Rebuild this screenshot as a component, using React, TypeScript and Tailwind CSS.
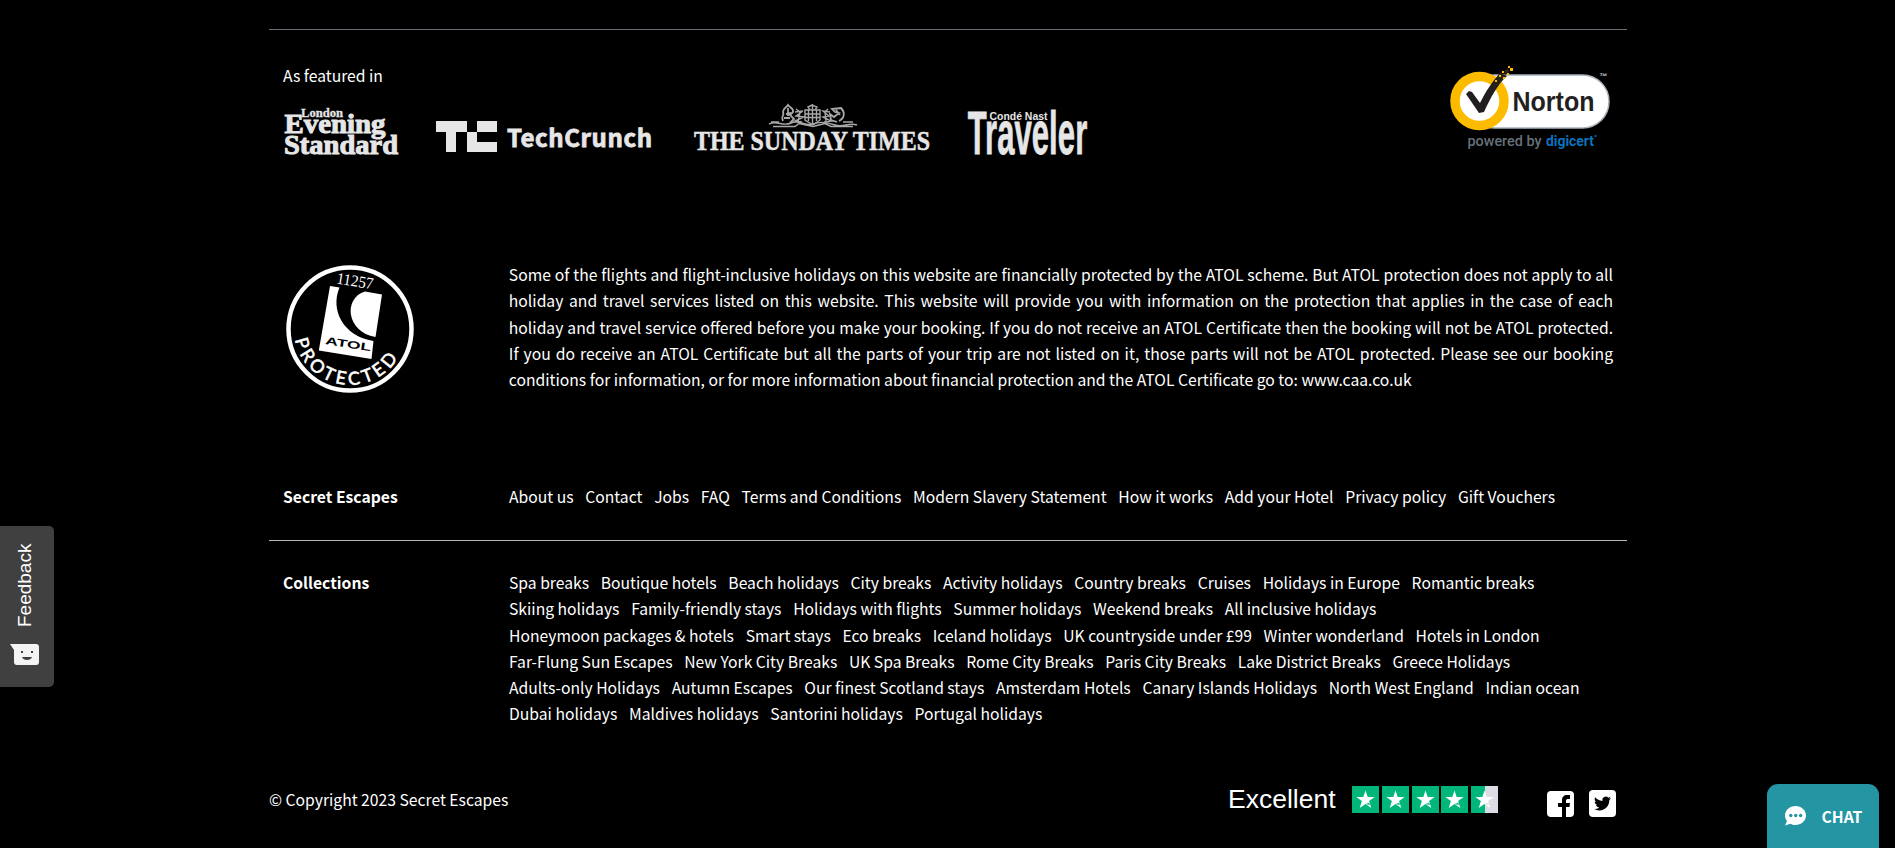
import React from "react";

const companyLinks = ["About us", "Contact", "Jobs", "FAQ", "Terms and Conditions", "Modern Slavery Statement", "How it works", "Add your Hotel", "Privacy policy", "Gift Vouchers"];

const collectionRows = [
  ["Spa breaks", "Boutique hotels", "Beach holidays", "City breaks", "Activity holidays", "Country breaks", "Cruises", "Holidays in Europe", "Romantic breaks"],
  ["Skiing holidays", "Family-friendly stays", "Holidays with flights", "Summer holidays", "Weekend breaks", "All inclusive holidays"],
  ["Honeymoon packages & hotels", "Smart stays", "Eco breaks", "Iceland holidays", "UK countryside under £99", "Winter wonderland", "Hotels in London"],
  ["Far-Flung Sun Escapes", "New York City Breaks", "UK Spa Breaks", "Rome City Breaks", "Paris City Breaks", "Lake District Breaks", "Greece Holidays"],
  ["Adults-only Holidays", "Autumn Escapes", "Our finest Scotland stays", "Amsterdam Hotels", "Canary Islands Holidays", "North West England", "Indian ocean"],
  ["Dubai holidays", "Maldives holidays", "Santorini holidays", "Portugal holidays"],
];

const atolLines = [
  "Some of the flights and flight-inclusive holidays on this website are financially protected by the ATOL scheme. But ATOL protection does not apply to all",
  "holiday and travel services listed on this website. This website will provide you with information on the protection that applies in the case of each",
  "holiday and travel service offered before you make your booking. If you do not receive an ATOL Certificate then the booking will not be ATOL protected.",
  "If you do receive an ATOL Certificate but all the parts of your trip are not listed on it, those parts will not be ATOL protected. Please see our booking",
];

function LinkRow({ items }: { items: string[] }) {
  return (
    <div className="flex gap-[11.700px] whitespace-nowrap">
      {items.map((t) => (
        <a key={t} href="#">{t}</a>
      ))}
    </div>
  );
}

function EveningStandard() {
  return (
    <svg className="overflow-visible" width="118" height="54" viewBox="0 0 118 54" fill="#e6e6e6" fontFamily="'Liberation Serif', serif" fontWeight="700" stroke="#e6e6e6">
      <text x="18" y="12.500" fontSize="12" strokeWidth=".3" textLength="42" lengthAdjust="spacingAndGlyphs">London</text>
      <text x="1.500" y="29" fontSize="28" strokeWidth="1" textLength="101" lengthAdjust="spacingAndGlyphs">Evening</text>
      <text x="1" y="50" fontSize="28" strokeWidth="1" textLength="114" lengthAdjust="spacingAndGlyphs">Standard</text>
    </svg>
  );
}

function TechCrunch() {
  return (
    <svg className="overflow-visible" width="218" height="36" viewBox="0 0 218 36" fill="#e6e6e6">
      <path d="M0 0H31V11H20V31H10V11H0Z M41 0H61V11H41Z M31 11H41V21H61V31H31Z" />
      <text x="71" y="26" fontFamily="'Noto Sans CJK JP', sans-serif" fontWeight="700" fontSize="24" stroke="#e6e6e6" strokeWidth=".8" textLength="145">TechCrunch</text>
    </svg>
  );
}

function SundayTimes() {
  return (
    <svg className="overflow-visible" width="238" height="54" viewBox="0 0 238 54" fill="#e6e6e6">
      <g fill="none" stroke="#a8a8a8" strokeWidth="1.4">
        <path d="M76 21c8-4 14 3 22-1s14 4 22 1 14-2 22 1 14-3 22 0M80 23.500h22l4-3 14 3 12-3 6 3h22M78 19h8M150 19h10" />
        <path d="M90 18c-3-5 2-5 0-9 0-4 4-5 5-7 2 3 6 3 5 7l-3 3 4 4-4 4M93 11l5-1M91 15h6M95 5v8" strokeWidth="1.8" />
        <path d="M146 18c6-3 6-9 2-13l-9 1 3 3 4 1-5 4-4-3 1 6 6 2M143 7l4 5" strokeWidth="1.8" />
        <path d="M112 7h15v10l-7 5-8-5zM112 11h15M112 14.500h15M119.500 1v21M115.500 7v11M123.500 7v11M115 4l4-2 5 2-2 3h-5zM102 9l8-1-7 5 8 1-9 4 7 1M137 9l-7-1 6 5-6 1 8 4-7 1M103 6l4 3-2 10M135 6l-3 3 1 10" />
      </g>
      <text x="1" y="47" fontFamily="'Liberation Serif', serif" fontWeight="700" fontSize="26.500" stroke="#e6e6e6" strokeWidth=".5" textLength="236" lengthAdjust="spacingAndGlyphs">THE SUNDAY TIMES</text>
    </svg>
  );
}

function Traveler() {
  return (
    <svg className="overflow-visible" width="122" height="48" viewBox="0 0 122 48" fill="#e6e6e6" stroke="#e6e6e6" fontFamily="'Liberation Sans', sans-serif" fontWeight="700">
      <g transform="translate(.7 44) scale(.5 1)">
        <text x="0" y="0" fontSize="62" strokeWidth=".8" textLength="239">Traveler</text>
      </g>
      <text x="22.500" y="9.500" fontSize="11" stroke="#000" strokeWidth="2" paintOrder="stroke" textLength="58" lengthAdjust="spacingAndGlyphs">Condé Nast</text>
    </svg>
  );
}

function Norton() {
  return (
    <svg className="overflow-visible" width="166" height="90" viewBox="0 0 166 90">
      <rect x="18" y="10" width="141" height="53" rx="26.500" fill="#fff" stroke="#a9b1ba" strokeWidth="1.500" />
      <circle cx="29.500" cy="36" r="24.500" fill="#fff" stroke="#fdbb00" strokeWidth="9.500" />
      <path d="M16 29l3-3 3 1 8 11C36 26 42 17 50 8l7 3C47 20 40 34 34 47l-5 1z" fill="#231f20" />
      <path d="M46 13l5-6 4 5-5 5zM54 6l4-3 1 4-4 3z" fill="#29230f" />
      <path d="M45 15h2v2h-2zM49 10h2v2h-2zM52 6h2v2h-2zM53 12h2v2h-2zM57 8h2v2h-2zM60 3h3v3h-3zM58 1h2v2h-2z" fill="#fdbb00" />
      <text x="62.500" y="46" fontFamily="'Liberation Sans', sans-serif" fontWeight="700" fontSize="27" fill="#231f20" textLength="82" lengthAdjust="spacingAndGlyphs">Norton</text>
      <text x="149.500" y="14" fontFamily="'Liberation Sans', sans-serif" fontWeight="700" fontSize="8" fill="#c9cfd6">™</text>
      <text x="17.500" y="81" fontFamily="Roboto, sans-serif" fontWeight="500" fontSize="15.500" fill="#66717a" textLength="74" lengthAdjust="spacingAndGlyphs">powered by</text>
      <text x="96" y="81" fontFamily="Roboto, sans-serif" fontWeight="700" fontSize="15.500" fill="#0b72bd" textLength="48" lengthAdjust="spacingAndGlyphs">digicert</text>
      <circle cx="145.500" cy="71" r="1" fill="#0b72bd" />
    </svg>
  );
}

function Atol() {
  return (
    <svg className="overflow-visible" width="130" height="130" viewBox="0 0 130 130">
      <defs>
        <path id="atolBottom" d="M9.850 74.700A56 56 0 0 0 120.150 74.700" />
      </defs>
      <circle cx="65" cy="65" r="61.500" fill="none" stroke="#fff" strokeWidth="4.500" />
      <path d="M45 22L54.500 23.500C45 46 58 72 88.500 77L86.500 95L33.800 86.500Z" fill="#fff" />
      <path d="M80 27.500L97 30.500L90.500 73C61 68 58 34 80 27.500Z" fill="#fff" />
      <text transform="translate(40 80) rotate(9)" fontFamily="'Liberation Sans', sans-serif" fontWeight="700" fontSize="10.500" textLength="46" lengthAdjust="spacingAndGlyphs">ATOL</text>
      <text transform="translate(51 19.500) rotate(9)" fontFamily="'Liberation Serif', serif" fontSize="16.500" fill="#fff" textLength="37" lengthAdjust="spacingAndGlyphs">11257</text>
      <text fontFamily="Lato, sans-serif" fontSize="18" fill="#fff" stroke="#fff" strokeWidth=".6">
        <textPath href="#atolBottom" startOffset="1" textLength="134">PROTECTED</textPath>
      </text>
    </svg>
  );
}

function Star({ half = false }: { half?: boolean }) {
  return (
    <svg width="27" height="27" viewBox="0 0 27 27">
      <path d="M0 0h27v27H0z" fill={half ? "#dcdce6" : "#00b67a"} />
      {half && <path d="M0 0h14v27H0z" fill="#00b67a" />}
      <path d="M13.500 4.500l2.200 6.400h7l-5.600 4.200 2.200 7-5.800-4.200-5.800 4.200 2.200-7-5.600-4.200h7z" fill="#fff" />
      <path d="M13.500 17.900l3.800-1.200.6 2.200z" fill={half ? "#dcdce6" : "#00b67a"} />
    </svg>
  );
}

export default function App() {
  return (
    <div className="relative h-[848px] w-full overflow-hidden bg-black font-['Noto_Sans_CJK_JP','Source_Sans_Pro',sans-serif] text-[15.700px] leading-[26.250px] text-white">
      <footer className="ml-[269px] w-[1358px] pt-[29px]">
        <section className="flex h-[220px] justify-between border-t border-[#6b6c76] px-[14px]">
          <div className="pt-[33px]">
            <p>As featured in</p>
            <div className="mt-[11px] flex h-[58px] items-end">
              <div className="h-[54px] w-[153px]"><EveningStandard /></div>
              <div className="h-[37.500px] w-[257px]"><TechCrunch /></div>
              <div className="h-[55px] w-[274px]"><SundayTimes /></div>
              <div className="h-[48.500px]"><Traveler /></div>
            </div>
          </div>
          <div className="-mr-[3px] pt-[35px]"><Norton /></div>
        </section>

        <section className="flex h-[235px] px-[14px]">
          <div className="w-[226px] pt-[15px] pl-[2.300px]"><Atol /></div>
          <div className="w-[1105px] pt-[13px]">
            {atolLines.map((line) => (
              <p key={line} className="whitespace-nowrap [text-align-last:justify]">{line}</p>
            ))}
            <p>conditions for information, or for more information about financial protection and the ATOL Certificate go to: www.caa.co.uk</p>
          </div>
        </section>

        <section className="flex h-[57px] border-b border-[#b5b6be] px-[14px]">
          <h3 className="w-[226px] font-bold">Secret Escapes</h3>
          <LinkRow items={companyLinks} />
        </section>

        <section className="flex h-[216px] px-[14px] pt-[29px]">
          <h3 className="w-[226px] font-bold">Collections</h3>
          <div>
            {collectionRows.map((row) => (
              <LinkRow key={row[0]} items={row} />
            ))}
          </div>
        </section>

        <section className="flex pt-[26px]">
          <p className="w-[959px] pt-[4px]">© Copyright 2023 Secret Escapes</p>
          <p className="w-[124px] pt-[3px] font-['Liberation_Sans',sans-serif] text-[26.500px]">Excellent</p>
          <div className="flex gap-[2.750px] pt-[3px]">
            <Star /><Star /><Star /><Star /><Star half />
          </div>
          <div className="ml-[49px] flex gap-[15px] pt-[7px]">
            <svg className="mt-px" width="27" height="26" viewBox="0 0 27 26">
              <rect width="27" height="26" rx="4" fill="#fff" />
              <path d="M15 26V16h-4v-4h4V9c0-3 2-5 5-5h3v4h-2c-1 0-2 .5-2 1.500V12h4l-.5 4H19v10z" fill="#000" />
            </svg>
            <svg width="27" height="27" viewBox="0 0 27 27">
              <rect width="27" height="27" rx="4" fill="#fff" />
              <path transform="translate(5 5) scale(.71)" d="M23.950 4.570a10 10 0 0 1-2.820.770 4.960 4.960 0 0 0 2.160-2.720c-.95.550-2 .960-3.130 1.180a4.920 4.920 0 0 0-8.380 4.480C7.690 8.100 4.070 6.130 1.640 3.160a4.820 4.820 0 0 0-.67 2.480c0 1.710.87 3.210 2.190 4.100a4.900 4.900 0 0 1-2.230-.620v.060a4.920 4.920 0 0 0 3.950 4.830 5 5 0 0 1-2.210.080 4.940 4.940 0 0 0 4.600 3.420A9.870 9.870 0 0 1 0 19.540a13.990 13.990 0 0 0 7.550 2.210c9.050 0 14-7.500 14-13.980 0-.210 0-.420-.02-.630a9.940 9.940 0 0 0 2.460-2.550z" fill="#000" />
            </svg>
          </div>
        </section>
      </footer>

      <button className="absolute top-[526px] left-0 flex h-[161px] w-[54px] flex-col items-center rounded-r-[5px] bg-[#404040] pr-[5px]">
        <span className="mt-[17px] h-[85px] [writing-mode:vertical-rl] rotate-180 text-center font-['Liberation_Sans',sans-serif] text-[19px] leading-[26px]">Feedback</span>
        <svg className="mt-[16px]" width="30" height="22" viewBox="0 0 30 22">
          <path d="M0 0H26a3 3 0 0 1 3 3V18a3 3 0 0 1-3 3H7a3 3 0 0 1-3-3V6Z" fill="#f4f4f4" />
          <path d="M11 7h2v2h-2zM21 7h2v2h-2zM12 13h10c-1 4-9 4-10 0z" fill="#404040" />
        </svg>
      </button>

      <button className="absolute top-[784px] left-[1767px] flex h-[64px] w-[112px] items-center rounded-t-[11px] bg-[#2495a3] pl-[18px]">
        <svg width="21" height="20" viewBox="0 0 21 20">
          <path d="M10.500 0C16 0 21 4 21 9.500S16 19 10.500 19c-2 0-3.500-.4-5-1.200L0 19.500l2-4.500C.7 13.500 0 11.500 0 9.500 0 4 5 0 10.500 0z" fill="#fff" />
          <circle cx="5.800" cy="9.500" r="1.700" fill="#2495a3" />
          <circle cx="10.700" cy="9.500" r="1.700" fill="#2495a3" />
          <circle cx="15.600" cy="9.500" r="1.700" fill="#2495a3" />
        </svg>
        <span className="ml-[15.500px] pt-[2px] font-bold">CHAT</span>
      </button>
    </div>
  );
}
